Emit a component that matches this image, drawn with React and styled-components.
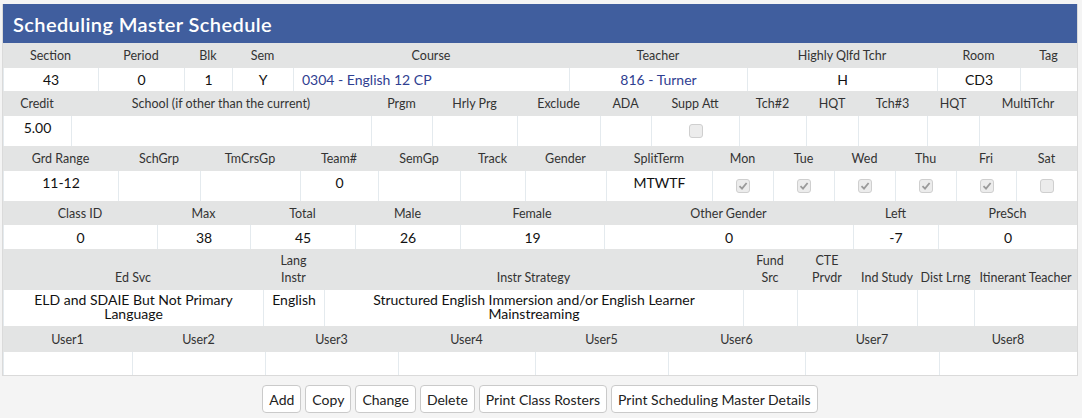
import styled, { createGlobalStyle } from "styled-components";

const GlobalStyle = createGlobalStyle`
  body {
    margin: 0;
    background: #f4f4f4;
    font-family: Lato, "Liberation Sans", sans-serif;
    color: #222;
  }
`;

const Page = styled.div`
  padding: 4px 4px 0 2px;
`;

const Panel = styled.div`
  width: 1074px;
  border: 1px solid #dadada;
  border-top: none;
  background: #fff;
`;

const Title = styled.h1`
  margin: 0;
  height: 39px;
  display: flex;
  align-items: center;
  padding: 0 0 0 10px;
  background: #405e9e;
  color: #fff;
  font-size: 20px;
  font-weight: 600;
  letter-spacing: 0.4px;
`;

const Grid = styled.div`
  display: grid;
  grid-template-columns: ${(p) => p.$cols.map((c) => `${c}px`).join(" ")};
`;

const Label = styled.div`
  background: #e3e4e4;
  height: ${(p) => p.$h || 24}px;
  display: flex;
  align-items: ${(p) => (p.$bottom ? "flex-end" : "center")};
  justify-content: center;
  text-align: center;
  font-size: 12.5px;
  line-height: 17px;
  color: #333;
  padding-bottom: ${(p) => (p.$bottom ? 4 : 0)}px;
  box-sizing: border-box;
  white-space: nowrap;
`;

const Value = styled.div`
  height: ${(p) => p.$h || 23}px;
  box-sizing: border-box;
  border-left: 1px solid #e4eaee;
  &:first-child {
    border-left: none;
  }
  display: flex;
  flex-direction: column;
  align-items: ${(p) => (p.$left ? "flex-start" : "center")};
  justify-content: ${(p) => (p.$top ? "flex-start" : "center")};
  padding: ${(p) => (p.$top ? "3px" : "0")} ${(p) => p.$side || 8}px 0;
  text-align: center;
  font-size: 14px;
  line-height: ${(p) => (p.$wrap ? 14 : 17)}px;
  color: ${(p) => (p.$link ? "#2f4091" : "#111")};
`;

const Check = styled.span`
  width: 14px;
  height: 14px;
  margin-top: 5px;
  box-sizing: border-box;
  border: 1px solid #cfcfcf;
  border-radius: 3px;
  background: #ececec;
  display: flex;
  align-items: center;
  justify-content: center;
`;

const Buttons = styled.div`
  width: 1076px;
  display: flex;
  justify-content: center;
  gap: 4px;
  margin-top: 9px;
`;

const Button = styled.button`
  height: 28px;
  padding: 0 6px;
  background: #fff;
  border: 1px solid #cacaca;
  border-radius: 4px;
  font-family: inherit;
  font-size: 14px;
  color: #222;
`;

function Box({ checked }) {
  return (
    <Check>
      {checked && (
        <svg width="10" height="10" viewBox="0 0 10 10">
          <path d="M1.5 5.2 L4 7.6 L8.6 2" fill="none" stroke="#9a9a9a" strokeWidth="1.8" />
        </svg>
      )}
    </Check>
  );
}

const row1 = [95, 86, 48, 61, 276, 178, 190, 83, 57];
const row2 = [68, 300, 61, 85, 83, 51, 88, 67, 52, 69, 52, 98];
const row3 = [115, 82, 100, 78, 82, 65, 81, 106, 61, 61, 61, 61, 60, 61];
const row4 = [154, 93, 105, 105, 144, 249, 85, 139];
const row5 = [260, 61, 419, 54, 60, 60, 57, 103];
const row6 = [129, 133, 133, 137, 133, 137, 134, 138];

const days = ["Mon", "Tue", "Wed", "Thu", "Fri", "Sat"];

export default function App() {
  return (
    <Page>
      <GlobalStyle />
      <Panel>
        <Title>Scheduling Master Schedule</Title>

        <Grid $cols={row1}>
          {["Section", "Period", "Blk", "Sem", "Course", "Teacher", "Highly Qlfd Tchr", "Room", "Tag"].map((l) => (
            <Label key={l} $h={25}>{l}</Label>
          ))}
          <Value>43</Value>
          <Value>0</Value>
          <Value>1</Value>
          <Value>Y</Value>
          <Value $left $link>0304 - English 12 CP</Value>
          <Value $link>816 - Turner</Value>
          <Value>H</Value>
          <Value>CD3</Value>
          <Value />
        </Grid>

        <Grid $cols={row2}>
          {["Credit", "School (if other than the current)", "Prgm", "Hrly Prg", "Exclude", "ADA", "Supp Att", "Tch#2", "HQT", "Tch#3", "HQT ", "MultiTchr"].map((l) => (
            <Label key={l} $h={25}>{l}</Label>
          ))}
          <Value $h={30} $top>5.00</Value>
          <Value $h={30} />
          <Value $h={30} />
          <Value $h={30} />
          <Value $h={30} />
          <Value $h={30} />
          <Value $h={30} $top><Box /></Value>
          <Value $h={30} />
          <Value $h={30} />
          <Value $h={30} />
          <Value $h={30} />
          <Value $h={30} />
        </Grid>

        <Grid $cols={row3}>
          {["Grd Range", "SchGrp", "TmCrsGp", "Team#", "SemGp", "Track", "Gender", "SplitTerm", ...days].map((l) => (
            <Label key={l} $h={25}>{l}</Label>
          ))}
          <Value $h={30} $top>11-12</Value>
          <Value $h={30} />
          <Value $h={30} />
          <Value $h={30} $top>0</Value>
          <Value $h={30} />
          <Value $h={30} />
          <Value $h={30} />
          <Value $h={30} $top>MTWTF</Value>
          {days.map((d) => (
            <Value key={d} $h={30} $top><Box checked={d !== "Sat"} /></Value>
          ))}
        </Grid>

        <Grid $cols={row4}>
          {["Class ID", "Max", "Total", "Male", "Female", "Other Gender", "Left", "PreSch"].map((l) => (
            <Label key={l}>{l}</Label>
          ))}
          {["0", "38", "45", "26", "19", "0", "-7", "0"].map((v, i) => (
            <Value key={i} $h={24}>{v}</Value>
          ))}
        </Grid>

        <Grid $cols={row5}>
          <Label $h={41} $bottom>Ed Svc</Label>
          <Label $h={41} $bottom>Lang<br />Instr</Label>
          <Label $h={41} $bottom>Instr Strategy</Label>
          <Label $h={41} $bottom>Fund<br />Src</Label>
          <Label $h={41} $bottom>CTE<br />Prvdr</Label>
          <Label $h={41} $bottom>Ind Study</Label>
          <Label $h={41} $bottom>Dist Lrng</Label>
          <Label $h={41} $bottom>Itinerant Teacher</Label>
          <Value $h={36} $top $wrap>ELD and SDAIE But Not Primary Language</Value>
          <Value $h={36} $top $wrap>English</Value>
          <Value $h={36} $top $wrap $side={40}>
            Structured English Immersion and/or English Learner Mainstreaming
          </Value>
          <Value $h={36} />
          <Value $h={36} />
          <Value $h={36} />
          <Value $h={36} />
          <Value $h={36} />
        </Grid>

        <Grid $cols={row6}>
          {row6.map((_, i) => (
            <Label key={i} $h={26}>User{i + 1}</Label>
          ))}
          {row6.map((_, i) => (
            <Value key={i} $h={23} />
          ))}
        </Grid>
      </Panel>

      <Buttons>
        <Button>Add</Button>
        <Button>Copy</Button>
        <Button>Change</Button>
        <Button>Delete</Button>
        <Button>Print Class Rosters</Button>
        <Button>Print Scheduling Master Details</Button>
      </Buttons>
    </Page>
  );
}
